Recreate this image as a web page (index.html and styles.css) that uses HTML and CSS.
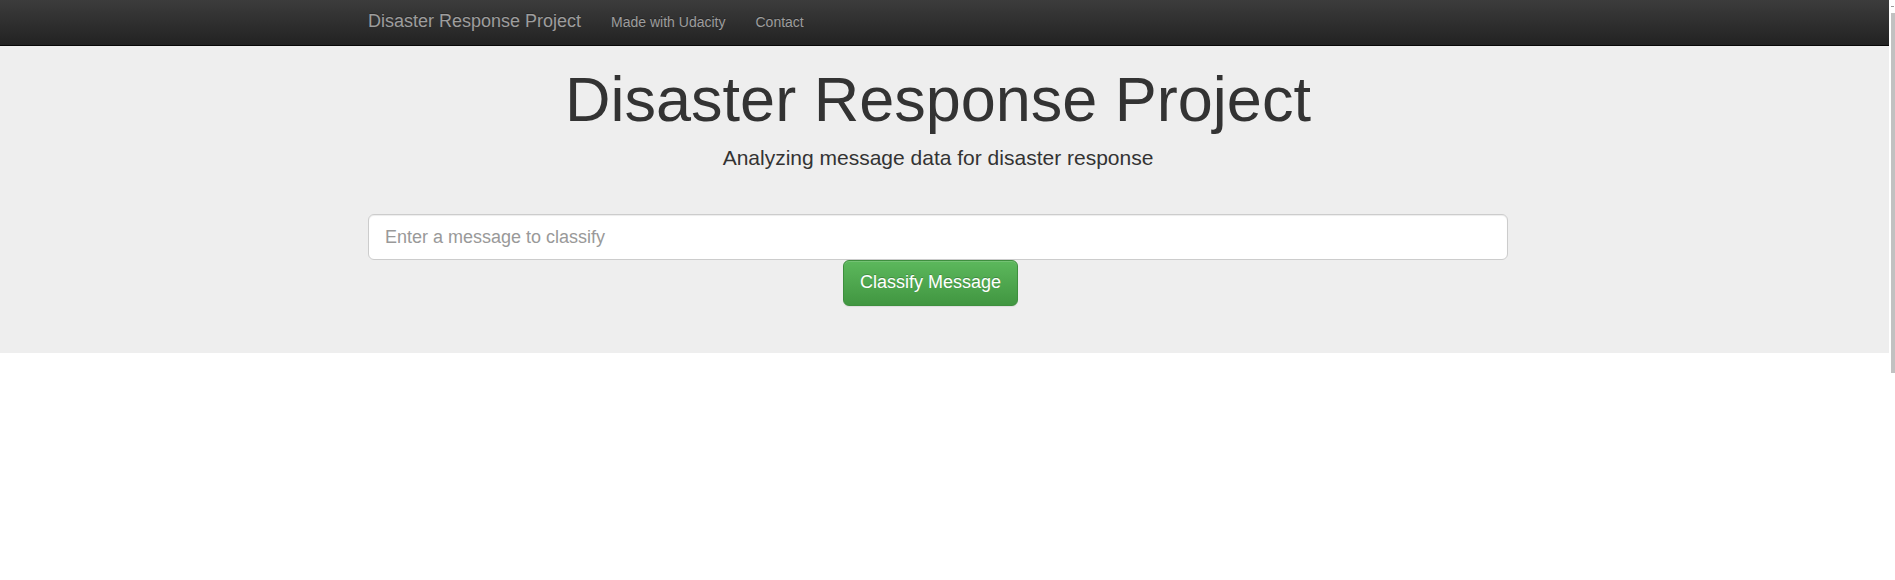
FILE: index.html
```html
<!DOCTYPE html>
<html lang="en">
<head>
<meta charset="utf-8">
<title>Disaster Response Project</title>
<link rel="stylesheet" href="styles.css">
</head>
<body>
<div class="window">
  <div class="page">
    <nav class="navbar">
      <div class="container nav-inner">
        <a class="brand" href="#">Disaster Response Project</a>
        <a class="nav-link" href="#">Made with Udacity</a>
        <a class="nav-link" href="#">Contact</a>
      </div>
    </nav>
    <div class="jumbotron">
      <div class="container">
        <h1 class="title">Disaster Response Project</h1>
        <p class="lead">Analyzing message data for disaster response</p>
        <form class="form">
          <input class="input" type="text" placeholder="Enter a message to classify">
          <div class="actions">
            <button type="button" class="btn">Classify Message</button>
          </div>
        </form>
      </div>
    </div>
  </div>
  <div class="scrollbar">
    <div class="scroll-arrow"></div>
    <div class="scroll-thumb"></div>
  </div>
</div>
</body>
</html>
```
FILE: styles.css
```css
* { box-sizing: border-box; }
html, body { margin: 0; padding: 0; }
body {
  font-family: "Liberation Sans", Arial, sans-serif;
  font-size: 14px;
  line-height: 1.42857;
  color: #333;
  background: #fff;
}
.window {
  display: flex;
  width: 1895px;
  height: 580px;
}
.page {
  width: 1889px;
  flex: none;
}
.container {
  width: 1140px;
  margin-left: auto;
  margin-right: auto;
}
.navbar {
  height: 46px;
  background: linear-gradient(to bottom, #3c3c3c 0%, #222 100%);
  border-bottom: 1px solid #080808;
  padding-right: 13px;
}
.nav-inner {
  display: flex;
  align-items: flex-start;
}
.brand {
  font-size: 18px;
  line-height: 20px;
  padding: 11px 15px 0 0;
  color: #9d9d9d;
  text-decoration: none;
  text-shadow: 0 -1px 0 rgba(0,0,0,.25);
}
.nav-link {
  font-size: 14px;
  line-height: 20px;
  padding: 12px 15px 0 15px;
  color: #9d9d9d;
  text-decoration: none;
  text-shadow: 0 -1px 0 rgba(0,0,0,.25);
}
.jumbotron {
  background: #eee;
  height: 307px;
  padding: 19px 13px 0 0;
}
.title {
  margin: 0 0 9px;
  font-size: 63px;
  line-height: 1.1;
  font-weight: 500;
  text-align: center;
  color: #333;
}
.lead {
  margin: 0 0 41px;
  font-size: 21px;
  line-height: 30px;
  text-align: center;
}
.form {
  display: flex;
  flex-direction: column;
  margin: 0;
}
.input {
  display: block;
  width: 100%;
  height: 46px;
  padding: 10px 16px;
  font-family: inherit;
  font-size: 18px;
  line-height: 1.3333;
  color: #555;
  background: #fff;
  border: 1px solid #ccc;
  border-radius: 6px;
  box-shadow: inset 0 1px 1px rgba(0,0,0,.075);
  outline: none;
}
.input::placeholder { color: #999; }
.actions {
  display: flex;
  justify-content: center;
  padding-right: 15px;
}
.btn {
  height: 46px;
  padding: 10px 16px;
  font-family: inherit;
  font-size: 18px;
  line-height: 1.3333;
  color: #fff;
  background: linear-gradient(to bottom, #5cb85c 0%, #419641 100%);
  border: 1px solid #3e8f3e;
  border-radius: 6px;
  text-shadow: 0 -1px 0 rgba(0,0,0,.2);
  box-shadow: inset 0 1px 0 rgba(255,255,255,.15), 0 1px 1px rgba(0,0,0,.075);
  cursor: pointer;
}
.scrollbar {
  flex: 1;
  display: flex;
  flex-direction: column;
  align-items: flex-end;
  background: #fff;
}
.scroll-arrow {
  width: 3px;
  height: 1px;
  margin: 6px 1px 6px 0;
  background: #999;
}
.scroll-thumb {
  width: 4px;
  height: 360px;
  background: #c1c1c1;
}
```
